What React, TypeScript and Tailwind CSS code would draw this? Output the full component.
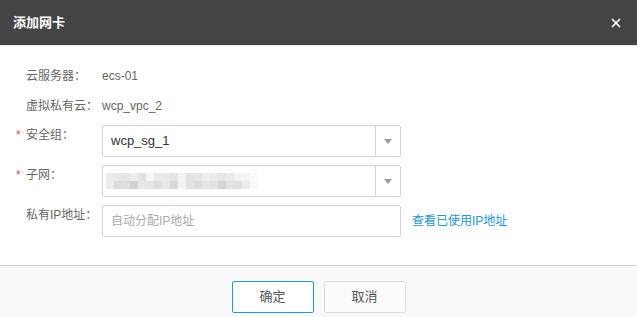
import { X } from 'lucide-react';

// pixelated (mosaic) subnet name, as in the screenshot
const mosaicTop = ['#ebebeb', '#e8e8ea', '#e6e6e8', '#ededef', '#e4e2e0', '#f3f5f8', '#eaeaea', '#e9e9eb', '#e5e5e5', '#f2f3f5', '#e3e3e3', '#e6e6e8', '#eeeef0', '#eaeaea', '#e4e5e8', '#ebebeb', '#f2f2f2', '#f5f5f5', '#fafafa', '#ffffff'];
const mosaicBottom = ['#ededed', '#dcdcdc', '#dedede', '#d2d2d6', '#e8e8e6', '#e4e6ea', '#dedede', '#e6e6e6', '#dadada', '#f2f3f5', '#e2e2e2', '#dcdcdc', '#e6e6e6', '#e2e2e2', '#d4d4d8', '#e2e2e2', '#e0e0e0', '#ececec', '#fafafa', '#ffffff'];

function SelectArrow() {
    return (
        <div className="w-[25px] h-full border-l border-[#d4d4d4] flex items-center justify-center">
            <svg width="8" height="5" viewBox="0 0 8 5">
                <path d="M0 0H8L4 5Z" fill="#9a9a9a" />
            </svg>
        </div>
    );
}

function Label({ text, required }: { text: string; required?: boolean }) {
    return (
        <div className="flex shrink-0">
            <span className="w-[10px] text-[#e84c3d] text-[12px] leading-[20px]">{required ? '*' : ''}</span>
            <span className="w-[76px] text-[12px] leading-[20px] text-[#666]">{text}</span>
        </div>
    );
}

export default function App() {
    return (
        <div className="w-[637px] h-[317px] bg-white flex flex-col overflow-hidden" style={{ fontFamily: '"Liberation Sans", "Noto Sans CJK SC", sans-serif' }}>

            {/* Header */}
            <div className="h-[45px] shrink-0 bg-[#444444] flex items-center justify-between pl-[13px] pr-[14px] border-b border-[#e8e8e8] box-content">
                <span className="text-white text-[13px] font-bold">添加网卡</span>
                <X size={14} strokeWidth={3} className="text-white" />
            </div>

            {/* Body */}
            <div className="flex-1 pt-[15px] pl-[16px]">
                <div className="flex items-center h-[30px]">
                    <Label text="云服务器：" />
                    <span className="text-[12px] text-[#666]">ecs-01</span>
                </div>
                <div className="flex items-center h-[30px]">
                    <Label text="虚拟私有云：" />
                    <span className="text-[12px] text-[#666]">wcp_vpc_2</span>
                </div>

                <div className="flex flex-col gap-[8px] mt-[4px]">
                    <div className="flex items-start">
                        <Label text="安全组：" required />
                        <div className="w-[299px] h-[32px] border border-[#d4d4d4] rounded-[2px] flex items-center">
                            <span className="flex-1 pl-[8px] text-[13px] text-[#333]">wcp_sg_1</span>
                            <SelectArrow />
                        </div>
                    </div>

                    <div className="flex items-start">
                        <Label text="子网：" required />
                        <div className="w-[299px] h-[32px] border border-[#d4d4d4] rounded-[2px] flex items-center">
                            <div className="flex-1 pl-[3px] flex flex-col">
                                <div className="flex">
                                    {mosaicTop.map((c, i) => (
                                        <div key={i} className="w-[8px] h-[8px]" style={{ backgroundColor: c }} />
                                    ))}
                                </div>
                                <div className="flex">
                                    {mosaicBottom.map((c, i) => (
                                        <div key={i} className="w-[8px] h-[8px]" style={{ backgroundColor: c }} />
                                    ))}
                                </div>
                            </div>
                            <SelectArrow />
                        </div>
                    </div>

                    <div className="flex items-start">
                        <Label text="私有IP地址：" />
                        <div className="w-[299px] h-[32px] border border-[#d4d4d4] rounded-[2px] flex items-center pl-[8px]">
                            <span className="text-[12px] text-[#aaa]">自动分配IP地址</span>
                        </div>
                        <a className="ml-[11px] h-[32px] flex items-center text-[12px] text-[#2496dc]">查看已使用IP地址</a>
                    </div>
                </div>
            </div>

            {/* Footer */}
            <div className="h-[52px] shrink-0 bg-[#f9f9f9] border-t border-[#d0d0d0] flex justify-center items-start pt-[15px] gap-[10px]">
                <button className="w-[82px] h-[32px] rounded-[2px] border border-[#1a9de0] bg-white text-[13px] text-[#555]">确定</button>
                <button className="w-[82px] h-[32px] rounded-[2px] border border-[#dcdcdc] bg-[#fbfbfb] text-[13px] text-[#555]">取消</button>
            </div>
        </div>
    );
}
